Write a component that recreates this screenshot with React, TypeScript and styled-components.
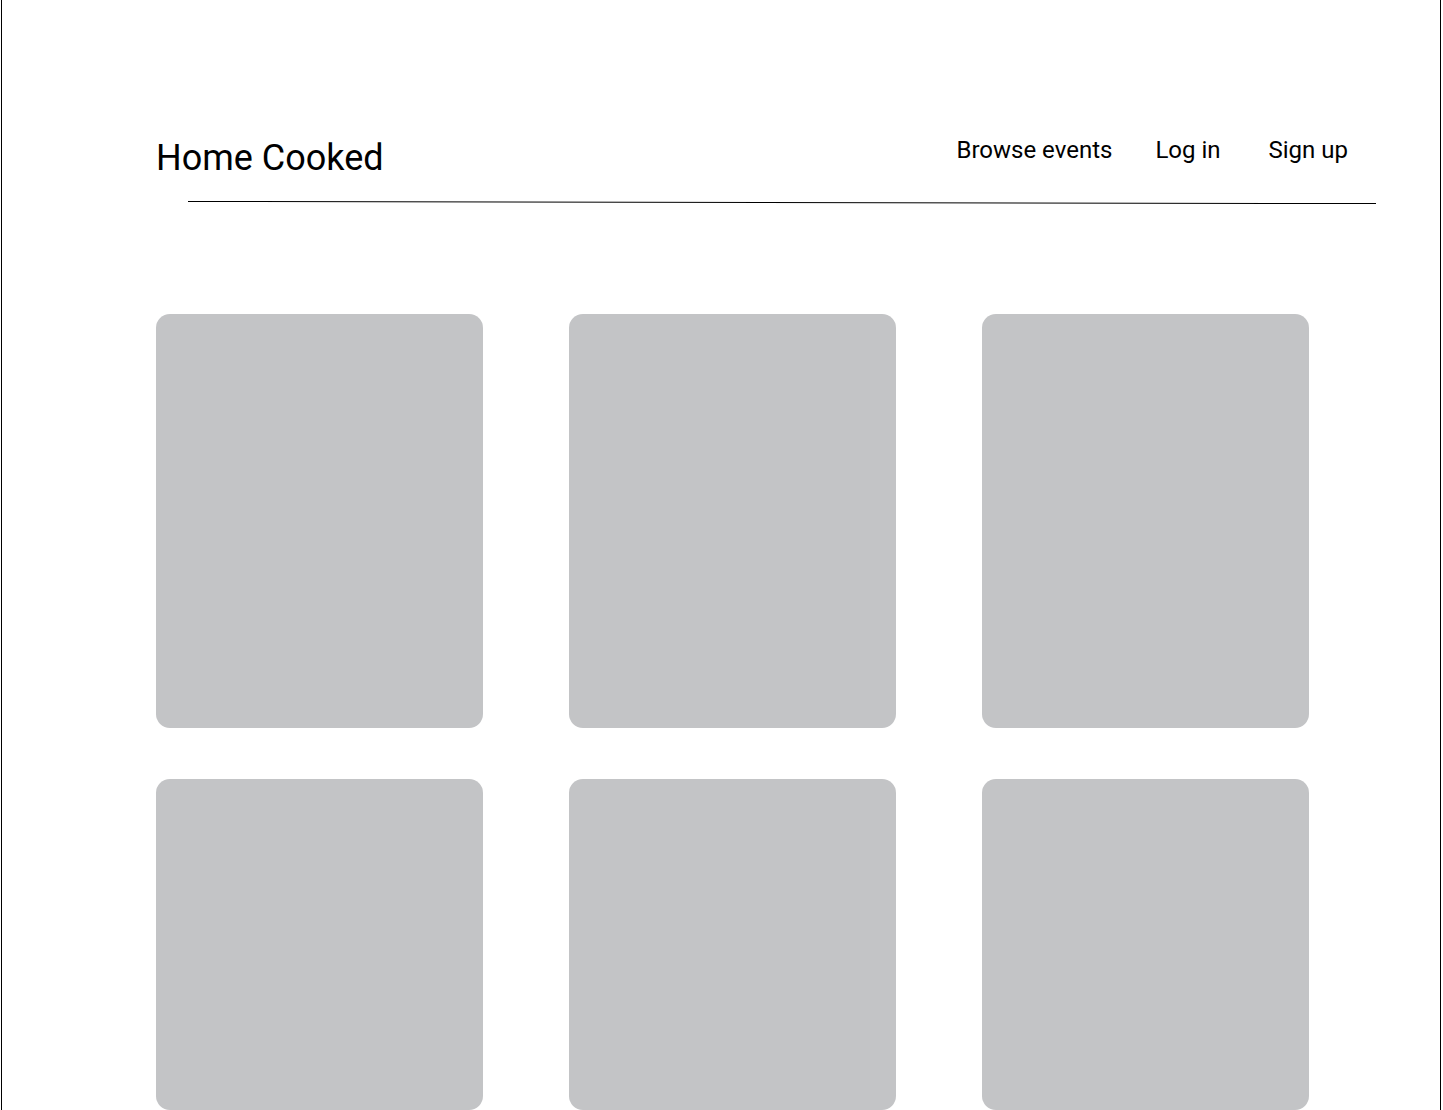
import React from "react";
import styled, { createGlobalStyle } from "styled-components";

const Global = createGlobalStyle`
  html, body { margin: 0; padding: 0; background: #ffffff; }
  body { font-family: Roboto, "Liberation Sans", sans-serif; color: #000; }
`;

const Frame = styled.div`
  margin-left: 1px;
  width: 1440px;
  height: 1110px;
  box-sizing: border-box;
  border-left: 1px solid #000;
  border-right: 1px solid #000;
  overflow: hidden;
`;

const Header = styled.header`
  display: flex;
  align-items: flex-start;
  justify-content: space-between;
  padding: 137px 92px 0 154px;
`;

const Logo = styled.h1`
  margin: 0;
  font-family: Roboto, "Liberation Sans", sans-serif;
  font-weight: 400;
  font-size: 36px;
  line-height: 42px;
  color: #000;
`;

const Nav = styled.nav`
  display: flex;
  padding-top: 1px;
`;

const NavLink = styled.a<{ $gap?: number }>`
  margin-left: ${(p) => p.$gap ?? 0}px;
  font-size: 24px;
  line-height: 24px;
  color: #000;
  text-decoration: none;
`;

const Rule = styled.hr`
  margin: 22px 0 0 186px;
  width: 1188px;
  height: 0;
  border: none;
  border-top: 1px solid #000;
  transform: rotate(0.1deg);
  transform-origin: left center;
`;

const Grid = styled.main`
  display: grid;
  grid-template-columns: repeat(3, 327px);
  grid-template-rows: 414px 331px;
  column-gap: 86px;
  row-gap: 51px;
  padding: 112px 0 0 154px;
`;

const Card = styled.div`
  background: #c3c4c6;
  border-radius: 14px;
`;

export default function App() {
  return (
    <>
      <Global />
      <Frame>
        <Header>
          <Logo>Home Cooked</Logo>
          <Nav>
            <NavLink href="#">Browse events</NavLink>
            <NavLink href="#" $gap={43}>Log in</NavLink>
            <NavLink href="#" $gap={48}>Sign up</NavLink>
          </Nav>
        </Header>
        <Rule />
        <Grid>
          {Array.from({ length: 6 }).map((_, i) => (
            <Card key={i} />
          ))}
        </Grid>
      </Frame>
    </>
  );
}
